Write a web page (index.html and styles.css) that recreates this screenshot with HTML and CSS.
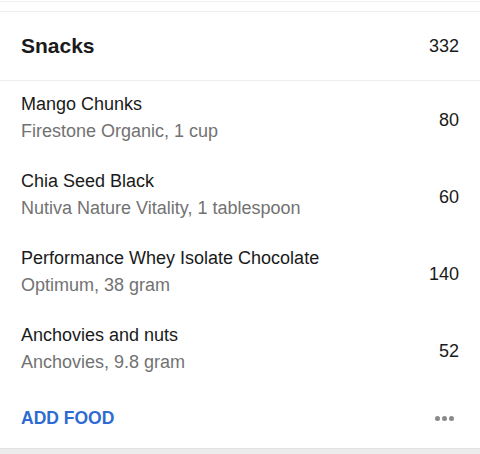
FILE: index.html
```html
<!DOCTYPE html>
<html>
<head>
<meta charset="utf-8">
<link rel="stylesheet" href="styles.css">
</head>
<body>
<div class="top"></div>
<section class="card">
  <header class="head">
    <h2 class="title">Snacks</h2>
    <span class="total">332</span>
  </header>
  <ul class="list">
    <li class="item">
      <div class="info"><div class="name">Mango Chunks</div><div class="sub">Firestone Organic, 1 cup</div></div>
      <span class="cal">80</span>
    </li>
    <li class="item">
      <div class="info"><div class="name">Chia Seed Black</div><div class="sub">Nutiva Nature Vitality, 1 tablespoon</div></div>
      <span class="cal">60</span>
    </li>
    <li class="item">
      <div class="info"><div class="name">Performance Whey Isolate Chocolate</div><div class="sub">Optimum, 38 gram</div></div>
      <span class="cal">140</span>
    </li>
    <li class="item">
      <div class="info"><div class="name">Anchovies and nuts</div><div class="sub">Anchovies, 9.8 gram</div></div>
      <span class="cal">52</span>
    </li>
  </ul>
  <footer class="foot">
    <span class="add">ADD FOOD</span>
    <span class="more"><i></i><i></i><i></i></span>
  </footer>
</section>
<div class="bottom"></div>
</body>
</html>
```
FILE: styles.css
```css
html, body { margin: 0; padding: 0; background: #fff; }
body { font-family: "Liberation Sans", Arial, sans-serif; color: #1c1c1e; width: 480px; height: 454px; overflow: hidden; }
.top { height: 11px; border-top: 1px solid #f0f0f0; border-bottom: 1px solid #ececec; box-sizing: border-box; margin-top: 1px; }
.card { background: #fff; }
.head { height: 68px; display: flex; align-items: center; justify-content: space-between; padding: 0 21px; border-bottom: 1px solid #eeeeee; box-sizing: content-box; }
.title { margin: 0; font-size: 21px; font-weight: 700; color: #1a1a1a; }
.total { font-size: 18px; color: #1a1a1a; }
.list { list-style: none; margin: 0; padding: 0; }
.item { height: 77px; box-sizing: border-box; padding: 10px 21px 13px; display: flex; align-items: center; justify-content: space-between; }
.name { font-size: 18px; line-height: 26px; color: #1a1a1a; }
.sub { font-size: 18px; line-height: 28px; color: #727272; }
.cal { font-size: 18px; color: #1a1a1a; margin-top: 4px; }
.foot { height: 59px; display: flex; align-items: center; justify-content: space-between; padding: 0 21px; }
.add { font-size: 17.5px; font-weight: 700; color: #2d6ad2; }
.more { display: flex; gap: 2px; margin-right: 5px; }
.more i { display: block; width: 5px; height: 5px; border-radius: 50%; background: #8a8a8a; }
.bottom { height: 20px; background: #ececec; border-top: 1px solid #e2e2e2; }
```
